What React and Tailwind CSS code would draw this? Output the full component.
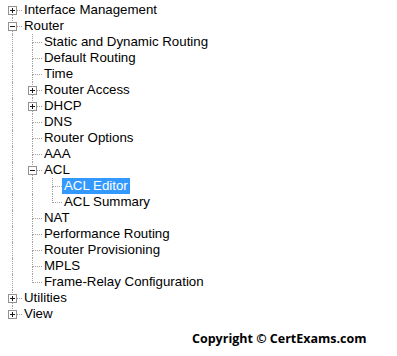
import React from "react";

// Tree data: label, children, collapsed state
const tree = [
  { label: "Interface Management", collapsed: true },
  {
    label: "Router",
    children: [
      { label: "Static and Dynamic Routing" },
      { label: "Default Routing" },
      { label: "Time" },
      { label: "Router Access", collapsed: true },
      { label: "DHCP", collapsed: true },
      { label: "DNS" },
      { label: "Router Options" },
      { label: "AAA" },
      {
        label: "ACL",
        children: [
          { label: "ACL Editor", selected: true },
          { label: "ACL Summary" },
        ],
      },
      { label: "NAT" },
      { label: "Performance Routing" },
      { label: "Router Provisioning" },
      { label: "MPLS" },
      { label: "Frame-Relay Configuration" },
    ],
  },
  { label: "Utilities", collapsed: true },
  { label: "View", collapsed: true },
];

// Flatten the tree into rows, keeping which ancestor lines continue
const flatten = (nodes, guides = [], isRoot = true) => {
  const rows = [];
  nodes.forEach((node, i) => {
    const last = i === nodes.length - 1;
    const first = isRoot && i === 0;
    rows.push({ ...node, guides, last, first });
    if (node.children && node.children.length) {
      rows.push(...flatten(node.children, [...guides, !last], false));
    }
  });
  return rows;
};

// Small +/- box over the connector
const ExpandBox = ({ open }) => (
  <div className="absolute left-[6px] top-[4px] w-[9px] h-[9px] border border-[#919191] bg-white flex items-center justify-center">
    <div className="relative w-[5px] h-[5px] flex items-center">
      <div className="w-[5px] h-px bg-[#1a1a1a]" />
      {!open && <div className="absolute left-[2px] top-0 w-px h-[5px] bg-[#1a1a1a]" />}
    </div>
  </div>
);

const Row = ({ row }) => {
  const open = row.children && row.children.length > 0;
  const hasBox = row.collapsed || open;
  return (
    <div className="flex h-[16px]">
      {/* ancestor guide lines */}
      {row.guides.map((g, i) => (
        <div key={i} className="w-[20px] h-full shrink-0 pl-[10px]">
          {g && <div className="h-full border-l border-dotted border-[#a0a0a0]" />}
        </div>
      ))}

      {/* connector: elbow or tee */}
      <div className="relative w-[20px] h-full shrink-0 flex flex-col pl-[10px]">
        <div
          className={`h-[9px] border-b border-dotted border-[#a0a0a0] ${
            row.first ? "" : "border-l"
          }`}
        />
        <div className={`h-[7px] ${row.last ? "" : "border-l border-dotted border-[#a0a0a0]"}`} />
        {hasBox && <ExpandBox open={open} />}
      </div>

      {/* label */}
      <div
        className={`h-full px-[2px] leading-[16px] whitespace-nowrap ${
          row.selected ? "bg-[#3399ff] text-white" : "text-black"
        }`}
      >
        {row.label}
      </div>
    </div>
  );
};

export default function App() {
  const rows = flatten(tree);
  return (
    <div className="w-[397px] h-[356px] bg-white overflow-hidden font-['Liberation_Sans',Arial,sans-serif] text-[13.3px]">
      <div className="pt-[2px] pl-[2px]">
        {rows.map((row, i) => (
          <Row key={i} row={row} />
        ))}
      </div>
      <div className="mt-[9px] pl-[192px] font-['Open_Sans',sans-serif] font-bold text-[12.5px] leading-[16px] text-black">
        Copyright © CertExams.com
      </div>
    </div>
  );
}
